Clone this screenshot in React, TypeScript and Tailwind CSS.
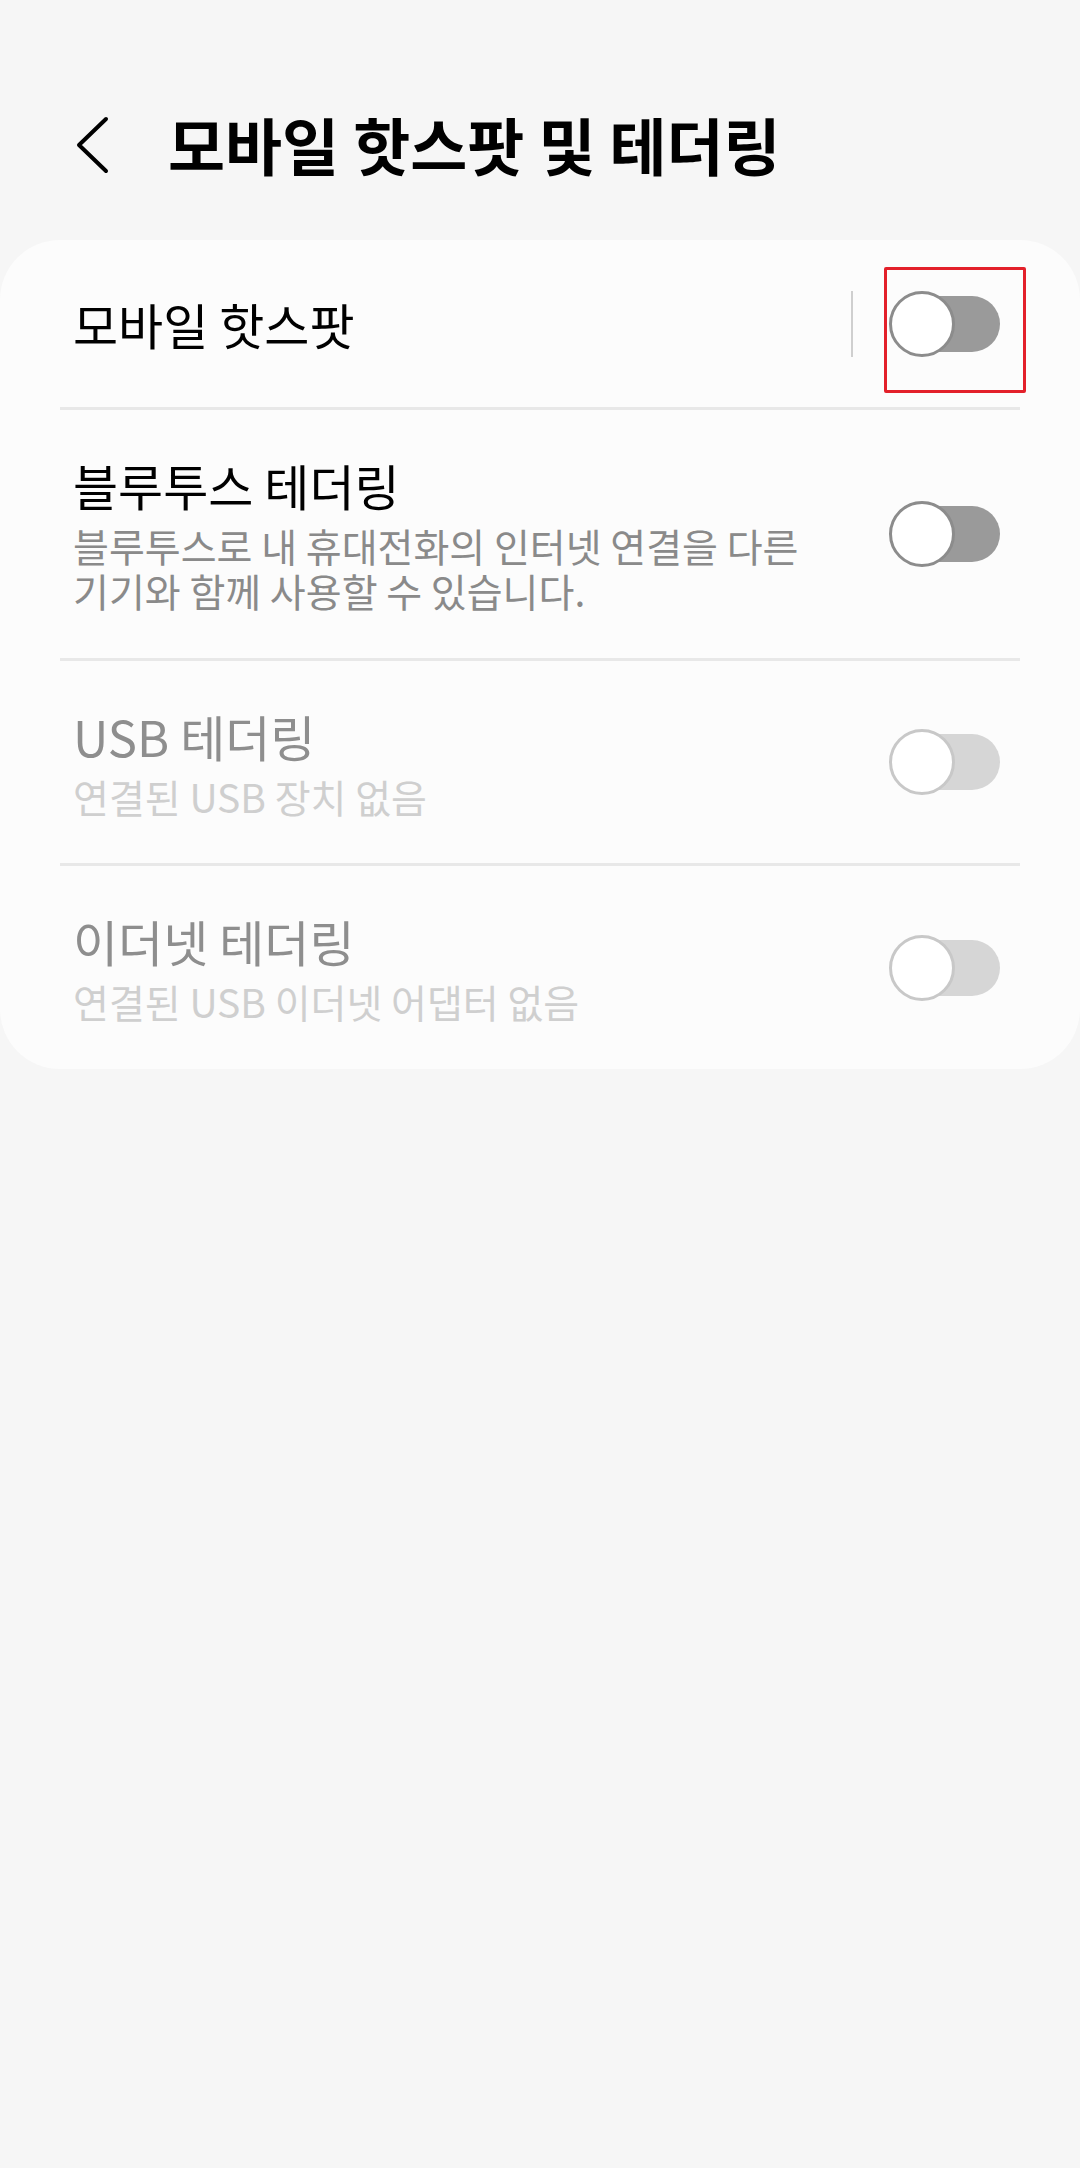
import React from 'react';

const FONT = { fontFamily: '"Noto Sans CJK KR", "Noto Sans", sans-serif' };

interface ToggleProps {
  disabled?: boolean;
}

function Toggle({ disabled = false }: ToggleProps) {
  return (
    <div className="relative flex h-[66px] w-[111px] shrink-0 items-center">
      <div
        className={`ml-[8px] h-[56px] w-[103px] rounded-full ${disabled ? 'bg-[#d6d6d6]' : 'bg-[#9a9a9a]'}`}
      />
      <div
        className={`absolute left-0 top-0 h-[66px] w-[66px] rounded-full border-[3px] bg-white ${
          disabled ? 'border-[#c8c8c8]' : 'border-[#8c8c8c]'
        }`}
      />
    </div>
  );
}

interface RowProps {
  title: string;
  subtitle?: React.ReactNode;
  disabled?: boolean;
  height: string;
}

function Row({ title, subtitle, disabled = false, height }: RowProps) {
  return (
    <div className={`flex items-center justify-between pl-[13px] pr-[20px] ${height}`}>
      <div className="w-[740px]">
        <p className={`text-[49px] leading-[60px] ${disabled ? 'text-[#8e8e8e]' : 'text-black'}`}>{title}</p>
        {subtitle && (
          <p className={`mt-[8px] text-[39px] leading-[45px] ${disabled ? 'text-[#cfcfcf]' : 'text-[#8a8a8a]'}`}>
            {subtitle}
          </p>
        )}
      </div>
      <Toggle disabled={disabled} />
    </div>
  );
}

export default function App() {
  return (
    <div className="min-h-[2168px] w-[1080px] bg-[#f6f6f6]" style={FONT}>
      {/* header */}
      <div className="flex h-[240px] items-start pt-[112px]">
        <div className="ml-[74px] flex h-[64px] w-[40px] items-center">
          <svg width="36" height="60" viewBox="0 0 36 60" fill="none">
            <path d="M32 5 L5 31 L32 57" stroke="#000" strokeWidth="4" strokeLinecap="round" strokeLinejoin="round" />
          </svg>
        </div>
        <h1 className="ml-[54px] text-[62px] font-bold leading-[64px] text-black">모바일 핫스팟 및 테더링</h1>
      </div>

      {/* card */}
      <div className="rounded-[60px] bg-[#fcfcfc] px-[60px]">
        <div className="flex h-[167px] items-center justify-between pl-[13px] pr-[20px]">
          <p className="text-[49px] leading-[60px] text-black">모바일 핫스팟</p>
          <div className="flex items-center">
            <div className="mr-[36px] h-[66px] w-[2px] bg-[#cfcfcf]" />
            <div className="relative">
              <Toggle />
              <div className="absolute -left-[5px] -top-[24px] h-[126px] w-[142px] rounded-[2px] border-[3px] border-[#e3202a]" />
            </div>
          </div>
        </div>
        <div className="h-[3px] bg-[#e8e8e8]" />
        <Row
          title="블루투스 테더링"
          subtitle="블루투스로 내 휴대전화의 인터넷 연결을 다른 기기와 함께 사용할 수 있습니다."
          height="h-[248px]"
        />
        <div className="h-[3px] bg-[#e8e8e8]" />
        <Row title="USB 테더링" subtitle="연결된 USB 장치 없음" disabled height="h-[202px]" />
        <div className="h-[3px] bg-[#e8e8e8]" />
        <Row title="이더넷 테더링" subtitle="연결된 USB 이더넷 어댑터 없음" disabled height="h-[203px]" />
      </div>
    </div>
  );
}
